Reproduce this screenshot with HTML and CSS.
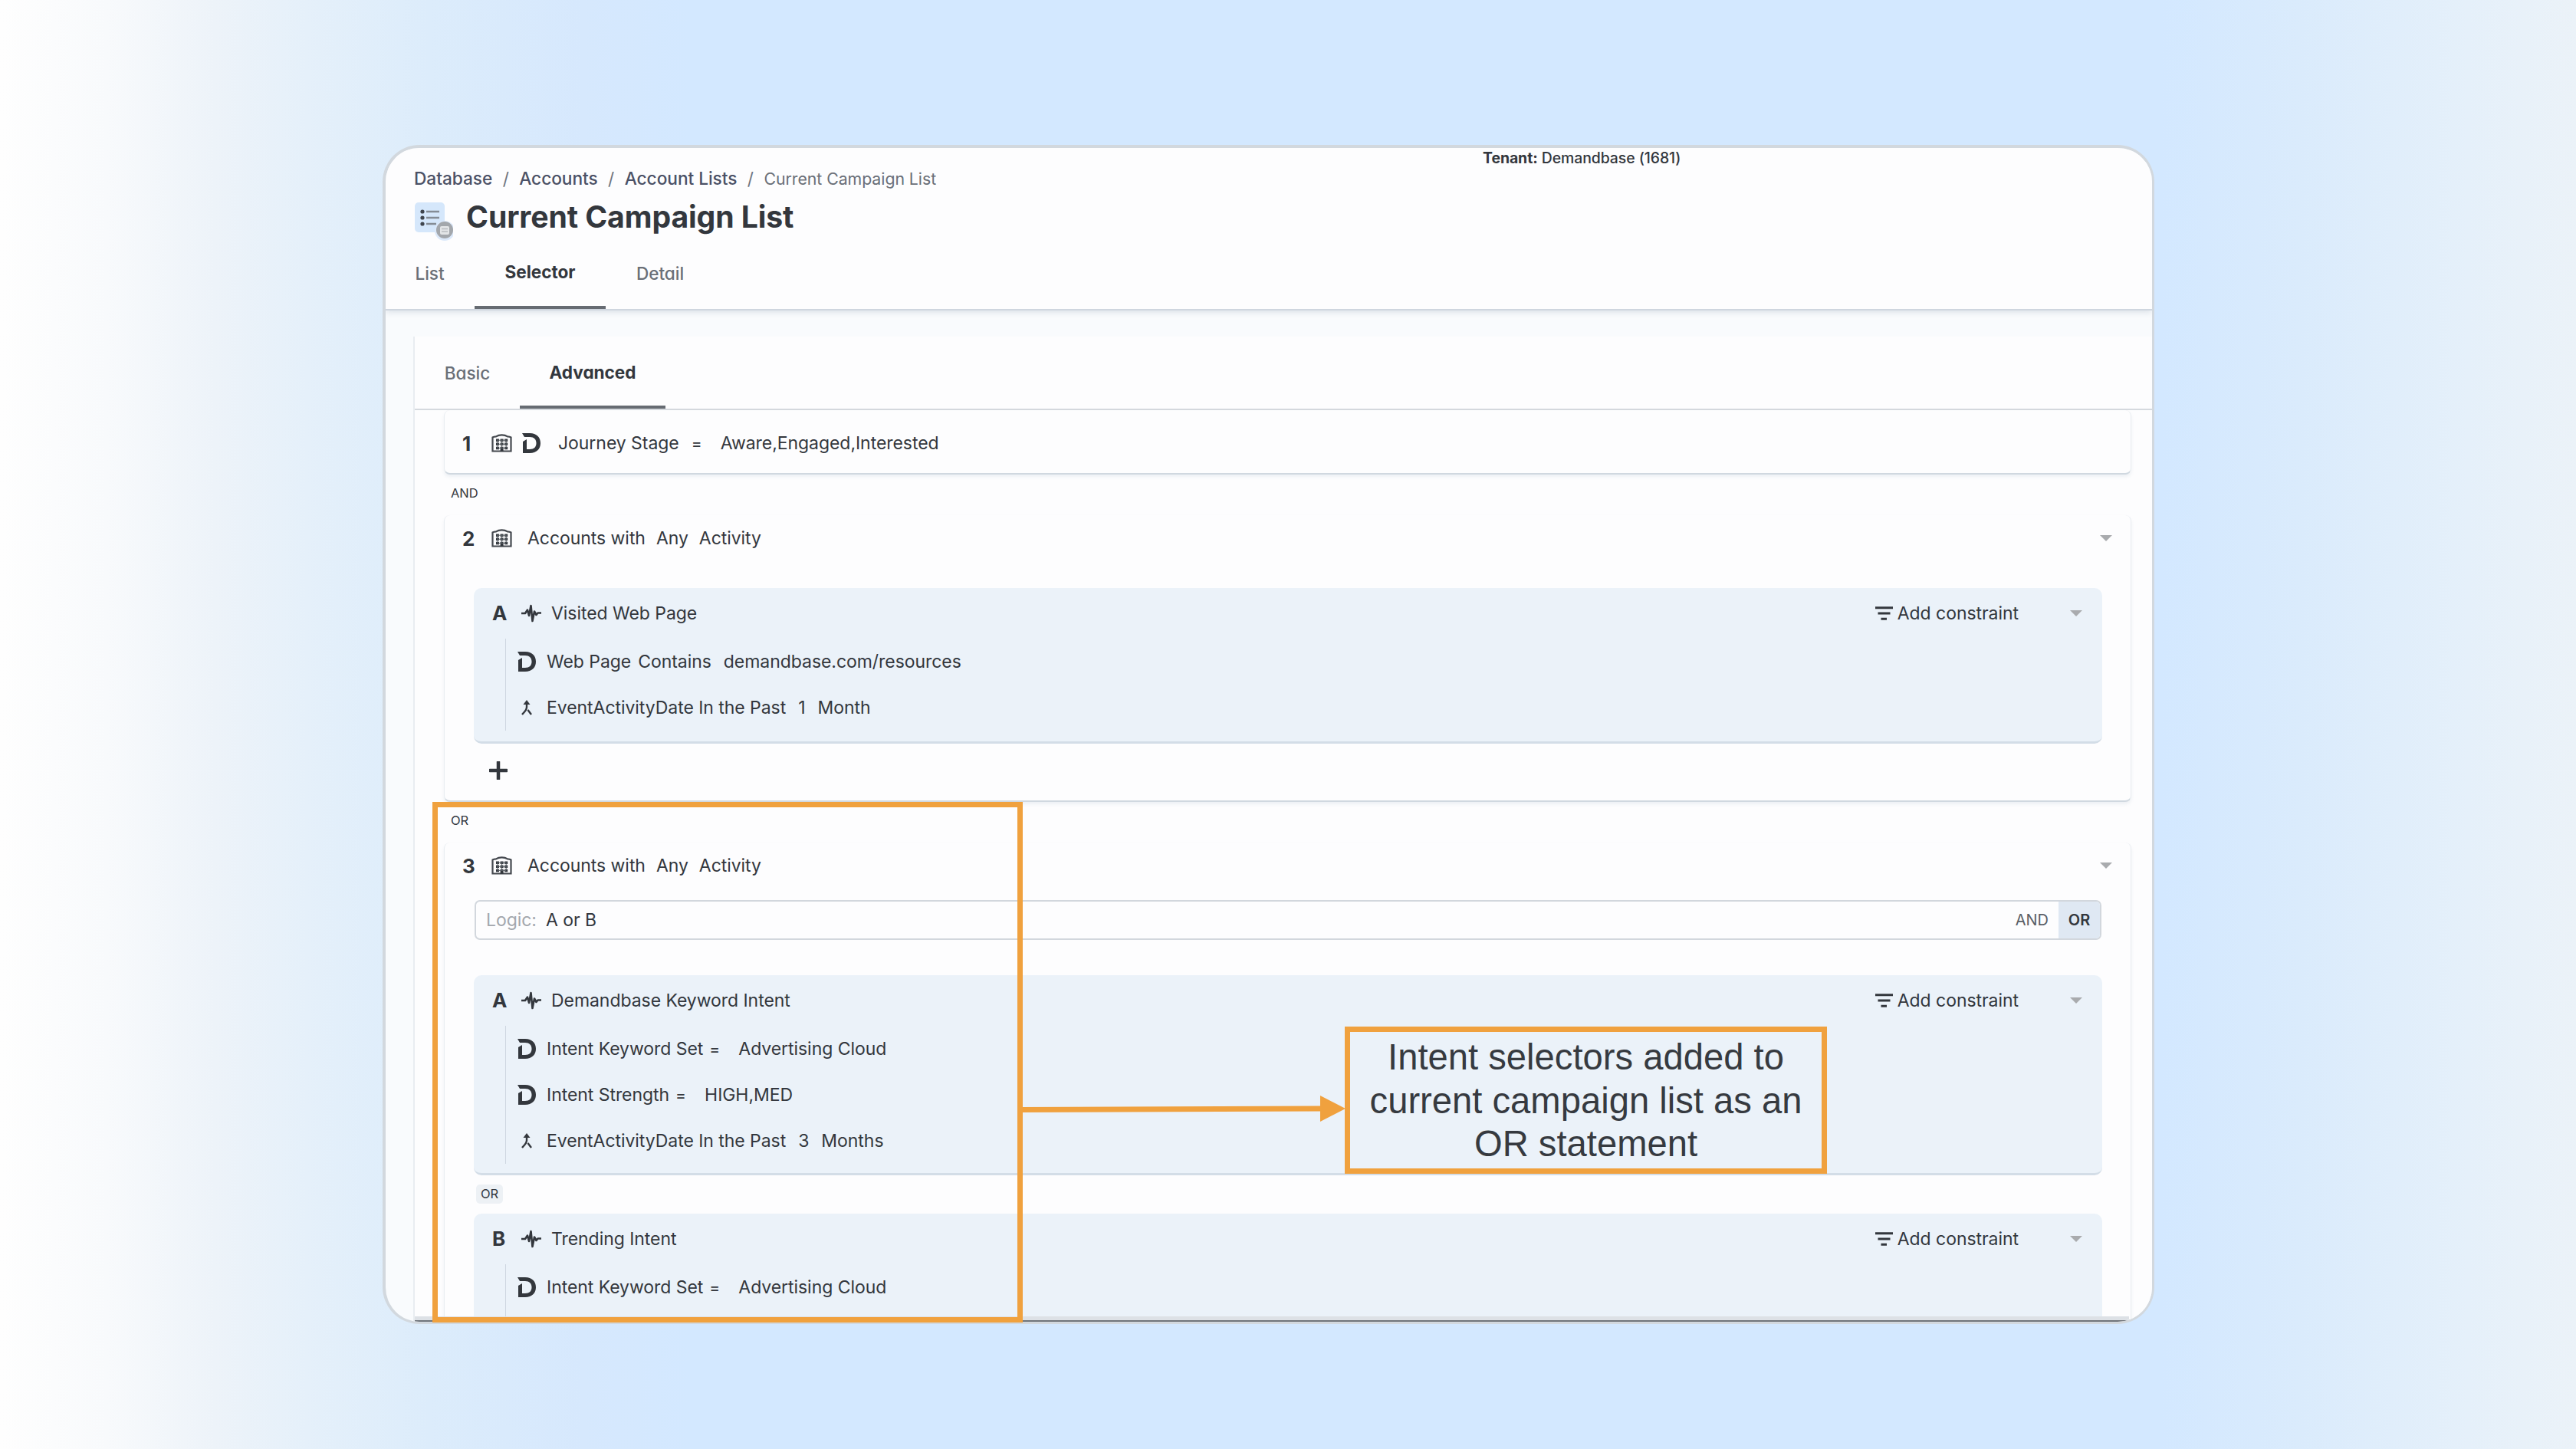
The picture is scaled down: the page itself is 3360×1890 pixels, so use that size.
FILE: index.html
```
<!DOCTYPE html>
<html lang="en">
<head>
    <meta charset="UTF-8">
    <meta name="viewport" content="width=device-width, initial-scale=1.0">
    <title>Current Campaign List</title>
    <link rel="stylesheet" href="styles.css">
</head>
<body>
    <!-- shared icons -->
    <svg class="sprite" width="0" height="0">
        <symbol id="building" viewBox="0 0 27 24">
            <path d="M1.500 22.500V4.500Q3 3.500 6 3.300Q9 1.300 13.500 1.300Q18 1.300 21 3.300Q24 3.500 25.500 4.500V22.500Z" fill="none" stroke="#44484e" stroke-width="2.200"/>
            <path d="M6 6.500h4v3.500H6zM11.600 6.500h4v3.500h-4zM17.200 6.500h4v3.500h-4zM6 11.600h4v3.500H6zM11.600 11.600h4v3.500h-4zM17.200 11.600h4v3.500h-4zM6 16.700h4v3.500H6zM17.200 16.700h4v3.500h-4zM11.600 16.700h4v6h-4z" fill="#33373d"/>
            <path d="M8 8.200H19M8 13.300H19M8 18.400H19M8 8V18M13.600 8V18M19.200 8V18" stroke="#5b6066" stroke-width="1"/>
        </symbol>
        <symbol id="dbase" viewBox="0 0 24 26">
            <path d="M0 0H10C19 0 24 5.500 24 13S19 26 10 26H1V11L6 8V21H10C15.500 21 18.500 18 18.500 13S15.500 5 10 5H3Z" fill="#33373d"/>
        </symbol>
        <symbol id="pulse" viewBox="0 0 26 24">
            <path d="M0 12H5L8 7.500L10 15L12.500 2L14.500 22L17 9.500L19.500 14L21.500 11.500H26" fill="none" stroke="#33373d" stroke-width="2.600" stroke-linejoin="round"/>
        </symbol>
        <symbol id="merge" viewBox="0 0 14 20">
            <path d="M7 3V9.500Q7 12 4.500 15L1 19M8.500 13L13 19" fill="none" stroke="#33373d" stroke-width="2.400"/>
            <path d="M2.500 6L7 0L11.500 6Z" fill="#33373d"/>
        </symbol>
        <symbol id="filter" viewBox="0 0 23 18">
            <path d="M0 1.700H23M3.500 9H19.500M7.500 16.300H15" stroke="#33373d" stroke-width="3"/>
        </symbol>
    </svg>

    <div class="window">
        <header class="header">
            <div class="tenant"><b>Tenant:</b> Demandbase (1681)</div>
            <nav class="breadcrumb">
                <a>Database</a><i>/</i><a>Accounts</a><i>/</i><a>Account Lists</a><i>/</i><span>Current Campaign List</span>
            </nav>
            <div class="title-row">
                <svg class="list-icon" width="50" height="50" viewBox="0 0 50 50">
                    <rect x="0" y="0" width="39" height="39" rx="5" fill="#d5e7fb"/>
                    <g fill="#3f454d"><circle cx="10" cy="12" r="2.600"/><circle cx="10" cy="20" r="2.600"/><circle cx="10" cy="28" r="2.600"/></g>
                    <path d="M15 12H32M15 20H32M15 28H28" stroke="#858c95" stroke-width="2.600"/>
                    <circle cx="39" cy="37" r="13" fill="#dce9fa"/>
                    <circle cx="39" cy="36" r="11" fill="#a3a7ac"/>
                    <rect x="33" y="31" width="12" height="11" rx="2" fill="#e3e5e7"/>
                    <path d="M35 34.500H43M35 38H43" stroke="#b9bcc0" stroke-width="1.500"/>
                </svg>
                <h1>Current Campaign List</h1>
            </div>
            <div class="tabs main-tabs">
                <div class="tab">List</div>
                <div class="tab active">Selector</div>
                <div class="tab">Detail</div>
            </div>
        </header>

        <main class="panel">
            <div class="tabs sub-tabs">
                <div class="tab">Basic</div>
                <div class="tab active">Advanced</div>
            </div>

            <section class="card first">
                <div class="card-head">
                    <b class="num">1</b>
                    <svg class="building close" width="27" height="24"><use href="#building"/></svg>
                    <svg class="dbase far" width="24" height="26"><use href="#dbase"/></svg>
                    <span>Journey Stage</span><span class="eq">=</span><span class="eq-value">Aware,Engaged,Interested</span>
                </div>
            </section>

            <div class="joiner">AND</div>

            <section class="card second">
                <div class="card-head">
                    <b class="num">2</b>
                    <svg class="building" width="27" height="24"><use href="#building"/></svg>
                    <span>Accounts with</span><span class="word">Any</span><span class="word">Activity</span>
                    <i class="caret"></i>
                </div>
                <div class="group">
                    <div class="group-head">
                        <b class="letter">A</b>
                        <svg class="pulse" width="26" height="24"><use href="#pulse"/></svg>
                        <span>Visited Web Page</span>
                        <span class="add"><svg width="23" height="18"><use href="#filter"/></svg>Add constraint</span>
                        <i class="caret"></i>
                    </div>
                    <div class="rules">
                        <div class="rule"><svg class="dbase" width="24" height="26"><use href="#dbase"/></svg><span>Web Page</span><span class="contains">Contains</span><span class="word">demandbase.com/resources</span></div>
                        <div class="rule"><svg class="merge" width="14" height="20"><use href="#merge"/></svg><span>EventActivityDate In the Past</span><span class="word">1</span><span class="word">Month</span></div>
                    </div>
                </div>
                <svg class="plus" width="24" height="24" viewBox="0 0 24 24"><path d="M12 1V23M1 12H23" stroke="#33373d" stroke-width="4.500" stroke-linecap="round"/></svg>
            </section>

            <div class="joiner">OR</div>

            <section class="card third">
                <div class="card-head">
                    <b class="num">3</b>
                    <svg class="building" width="27" height="24"><use href="#building"/></svg>
                    <span>Accounts with</span><span class="word">Any</span><span class="word">Activity</span>
                    <i class="caret"></i>
                </div>
                <div class="logic">
                    <span class="logic-label">Logic:</span><span>A or B</span>
                    <span class="toggle">AND</span><span class="toggle on">OR</span>
                </div>
                <div class="group">
                    <div class="group-head">
                        <b class="letter">A</b>
                        <svg class="pulse" width="26" height="24"><use href="#pulse"/></svg>
                        <span>Demandbase Keyword Intent</span>
                        <span class="add"><svg width="23" height="18"><use href="#filter"/></svg>Add constraint</span>
                        <i class="caret"></i>
                    </div>
                    <div class="rules">
                        <div class="rule"><svg class="dbase" width="24" height="26"><use href="#dbase"/></svg><span>Intent Keyword Set</span><span class="eq">=</span><span class="eq-value">Advertising Cloud</span></div>
                        <div class="rule"><svg class="dbase" width="24" height="26"><use href="#dbase"/></svg><span>Intent Strength</span><span class="eq">=</span><span class="eq-value">HIGH,MED</span></div>
                        <div class="rule"><svg class="merge" width="14" height="20"><use href="#merge"/></svg><span>EventActivityDate In the Past</span><span class="word">3</span><span class="word">Months</span></div>
                    </div>
                </div>
                <div class="badge">OR</div>
                <div class="group">
                    <div class="group-head">
                        <b class="letter">B</b>
                        <svg class="pulse" width="26" height="24"><use href="#pulse"/></svg>
                        <span>Trending Intent</span>
                        <span class="add"><svg width="23" height="18"><use href="#filter"/></svg>Add constraint</span>
                        <i class="caret"></i>
                    </div>
                    <div class="rules">
                        <div class="rule"><svg class="dbase" width="24" height="26"><use href="#dbase"/></svg><span>Intent Keyword Set</span><span class="eq">=</span><span class="eq-value">Advertising Cloud</span></div>
                        <div class="rule"></div>
                    </div>
                </div>
            </section>
        </main>
        <div class="bottom-edge"></div>
    </div>

    <!-- annotations on top of the window -->
    <div class="highlight"></div>
    <svg class="arrow" width="424" height="34" viewBox="0 0 424 34">
        <path d="M0 18.500L392 17" stroke="#f0a13e" stroke-width="7"/>
        <path d="M391 0L424 17L391 34Z" fill="#f0a13e"/>
    </svg>
    <div class="callout">Intent selectors added to<br>current campaign list as an<br>OR statement</div>
</body>
</html>
```

FILE: styles.css
```
* {
    box-sizing: border-box;
}
body {
    margin: 0;
    width: 3360px;
    height: 1890px;
    padding: 189px 0 0 499px;
    position: relative;
    overflow: hidden;
    font-family: Inter, sans-serif;
    font-size: 23px;
    letter-spacing: -0.05px;
    color: #33373d;
    white-space: nowrap;
    background: linear-gradient(90deg, #fefefe 0, #f8fafc 140px, #edf3f9 280px, #e5f0fa 400px, #dcecfb 560px, #d6e8fd 760px, #d3e8ff 900px, #d3e8ff 2820px, #daebfc 3000px, #e5f0fa 3220px, #ebf2f8 3360px);
}
.sprite {
    position: absolute;
}
i {
    font-style: normal;
}
svg {
    display: block;
    flex: none;
}
.window {
    position: relative;
    width: 2311px;
    height: 1538px;
    border: 4px solid #d2d8de;
    border-right-width: 3px;
    border-bottom-width: 3px;
    border-radius: 48px;
    background: #f9fbfd;
    overflow: hidden;
}

/* header */
.header {
    position: relative;
    height: 212px;
    padding-top: 19px;
    background: #fdfdfe;
    border-bottom: 2px solid #cfd6df;
    box-shadow: 0 2px 8px rgba(80, 100, 130, 0.18);
}
.tenant {
    position: absolute;
    left: 1431px;
    top: 1px;
    line-height: 24px;
    font-size: 19.4px;
    font-weight: 500;
}
.breadcrumb {
    display: flex;
    align-items: center;
    height: 41px;
    padding-left: 37px;
    font-size: 22.7px;
    font-weight: 500;
    color: #4b5166;
}
.breadcrumb i {
    width: 35px;
    text-align: center;
    font-weight: 400;
    color: #70757e;
}
.breadcrumb span {
    font-size: 21.300px;
    font-weight: 400;
    color: #6a6f78;
}
.title-row {
    display: flex;
    align-items: center;
    height: 59px;
    padding-left: 38px;
}
.list-icon {
    margin-top: 13px;
}
h1 {
    margin: 0 0 0 17px;
    font-size: 39.2px;
    font-weight: 700;
    letter-spacing: -0.1px;
    color: #33373d;
}
.tabs {
    display: flex;
    font-size: 22.6px;
    font-feature-settings: "cv11";
}
.tab {
    display: flex;
    align-items: center;
    justify-content: center;
    border-bottom: 4px solid transparent;
    font-weight: 500;
    color: #6a6f77;
}
.tab.active {
    border-bottom-color: #666b72;
    font-weight: 700;
    color: #33373d;
}
.main-tabs {
    height: 86px;
    margin-top: 5px;
    margin-left: -1px;
}
.main-tabs .tab {
    width: 117px;
    padding-bottom: 4px;
}
.main-tabs .tab.active {
    width: 171px;
    padding-bottom: 8px;
}
.main-tabs .tab:last-child {
    width: 142px;
}

/* selector panel */
.panel {
    margin: 34px 0 0 36px;
    height: 1400px;
    border-left: 2px solid #e9edf1;
    background: #fdfdfe;
}
.sub-tabs {
    height: 96px;
    border-bottom: 2px solid #d5d9de;
}
.sub-tabs .tab {
    width: 137px;
    padding-top: 4px;
}
.sub-tabs .tab.active {
    width: 190px;
    padding-top: 2px;
}
.card {
    width: 2201px;
    margin-left: 38px;
    border: 1px solid #e9edf1;
    border-top: none;
    border-bottom: 2px solid #d0d8e0;
    border-radius: 8px;
    background: #fdfdfe;
    box-shadow: 0 3px 4px rgba(100, 130, 160, 0.1);
}
.first {
    height: 84px;
    padding-top: 13px;
}
.second {
    height: 374px;
}
.third {
    height: 700px;
}
.card-head {
    display: flex;
    align-items: center;
    height: 60px;
    padding: 0 24px 0 23px;
}
.num {
    width: 38px;
    font-size: 26px;
}
.building {
    margin-right: 20px;
}
.close {
    margin-right: 13px;
}
.far {
    margin-right: 23px;
}
.word {
    margin-left: 14px;
}
.rule .word {
    margin-left: 16px;
}
.contains {
    margin-left: 9px;
}
.eq {
    width: 14px;
    margin-left: 8px;
    font-size: 21px;
}
.eq-value {
    margin-left: 24px;
}
.first .eq {
    margin-left: 16px;
}
.caret {
    margin-left: auto;
    border: 8px solid transparent;
    border-top-color: #a9abae;
    border-bottom: none;
}
.joiner {
    height: 53px;
    padding: 0 0 4px 47px;
    line-height: 49px;
    font-size: 16.5px;
}

/* constraint groups */
.group {
    width: 2124px;
    margin: 35px 0 0 38px;
    padding-bottom: 14px;
    border-radius: 10px;
    border-bottom: 3px solid #d3dde7;
    background: #ebf2f9;
}
.group-head {
    display: flex;
    align-items: center;
    height: 66px;
    padding: 0 26px 1px 24px;
}
.letter {
    width: 38px;
    font-size: 26px;
}
.pulse {
    margin-right: 13px;
}
.add {
    display: flex;
    align-items: center;
    gap: 6px;
    margin-left: auto;
}
.group-head .caret {
    margin-left: 67px;
}
.rules {
    margin-left: 41px;
    border-left: 1px solid #cdd6e0;
}
.rule {
    display: flex;
    align-items: center;
    height: 60px;
    padding-left: 15px;
}
.rule .dbase {
    margin-right: 14px;
}
.rule .merge {
    margin: 0 19px 0 5px;
}
.plus {
    margin: 23px 0 0 58px;
}
.logic {
    display: flex;
    align-items: center;
    width: 2122px;
    height: 52px;
    margin: 15px 0 0 39px;
    padding-left: 13px;
    border: 2px solid #d2d7dd;
    border-radius: 7px;
    overflow: hidden;
}
.logic-label {
    margin-right: 12px;
    color: #a3a7ad;
}
.toggle {
    margin-left: auto;
    padding-right: 13px;
    font-size: 20px;
    color: #5a5f66;
}
.toggle.on {
    width: 54px;
    margin-left: 0;
    padding: 0;
    line-height: 52px;
    text-align: center;
    font-weight: 600;
    color: #33373d;
    background: #dfe8f3;
}
.third .group {
    margin-top: 46px;
    padding-bottom: 12px;
}
.badge {
    width: 35px;
    height: 25px;
    margin: 12px 0 0 41px;
    border-radius: 5px;
    line-height: 25px;
    text-align: center;
    font-size: 16.5px;
    background: #edf1f5;
}
.third .badge + .group {
    margin-top: 13px;
}
.bottom-edge {
    position: absolute;
    left: 38px;
    right: 30px;
    bottom: -1px;
    height: 8px;
    background: #dde1e6;
    border-bottom: 3px solid #70757b;
}

/* annotations */
.highlight {
    position: absolute;
    left: 564px;
    top: 1046px;
    width: 770px;
    height: 679px;
    border: 7px solid #f0a13e;
}
.arrow {
    position: absolute;
    left: 1331px;
    top: 1429px;
}
.callout {
    position: absolute;
    left: 1754px;
    top: 1339px;
    width: 629px;
    height: 192px;
    padding-top: 5px;
    border: 7px solid #f0a13e;
    font-family: "Liberation Sans", Arial, sans-serif;
    font-size: 47.200px;
    line-height: 56.500px;
    letter-spacing: 0;
    text-align: center;
    color: #363a40;
}
```
